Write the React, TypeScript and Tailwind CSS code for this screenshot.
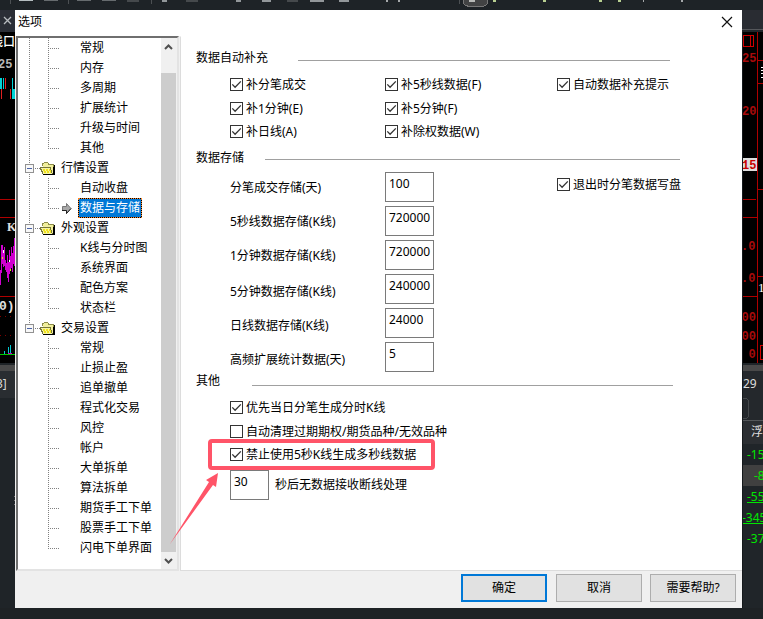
import React from 'react';

interface TreeNode {
    label: string;
    type: 'group' | 'item';
    trunk?: boolean;
    last?: boolean;
    selected?: boolean;
}

interface CheckProps {
    label: string;
    checked?: boolean;
}

interface StorageField {
    label: string;
    value: string;
    low?: boolean;
}

const tree: TreeNode[] = [
    { label: '常规', type: 'item', trunk: true },
    { label: '内存', type: 'item', trunk: true },
    { label: '多周期', type: 'item', trunk: true },
    { label: '扩展统计', type: 'item', trunk: true },
    { label: '升级与时间', type: 'item', trunk: true },
    { label: '其他', type: 'item', trunk: true, last: true },
    { label: '行情设置', type: 'group' },
    { label: '自动收盘', type: 'item', trunk: true },
    { label: '数据与存储', type: 'item', trunk: true, last: true, selected: true },
    { label: '外观设置', type: 'group' },
    { label: 'K线与分时图', type: 'item', trunk: true },
    { label: '系统界面', type: 'item', trunk: true },
    { label: '配色方案', type: 'item', trunk: true },
    { label: '状态栏', type: 'item', trunk: true, last: true },
    { label: '交易设置', type: 'group', last: true },
    { label: '常规', type: 'item' },
    { label: '止损止盈', type: 'item' },
    { label: '追单撤单', type: 'item' },
    { label: '程式化交易', type: 'item' },
    { label: '风控', type: 'item' },
    { label: '帐户', type: 'item' },
    { label: '大单拆单', type: 'item' },
    { label: '算法拆单', type: 'item' },
    { label: '期货手工下单', type: 'item' },
    { label: '股票手工下单', type: 'item' },
    { label: '闪电下单界面', type: 'item', last: true },
];

const storageFields: StorageField[] = [
    { label: '分笔成交存储(天)', value: '100' },
    { label: '5秒线数据存储(K线)', value: '720000' },
    { label: '1分钟数据存储(K线)', value: '720000' },
    { label: '5分钟数据存储(K线)', value: '240000', low: true },
    { label: '日线数据存储(K线)', value: '24000', low: true },
    { label: '高频扩展统计数据(天)', value: '5', low: true },
];

const GroupRow = ({ node }: { node: TreeNode }) => (
    <div className="flex h-5 shrink-0 items-center">
        <svg className="h-5 w-[43px] shrink-0" viewBox="0 0 43 20" shapeRendering="crispEdges">
            <path d={node.last ? 'M11.5 0V6' : 'M11.5 0V20'} stroke="#808080" strokeDasharray="1 1" />
            <path d="M17 10.5H22" stroke="#808080" strokeDasharray="1 1" />
            <rect x="7.5" y="6.5" width="8" height="8" fill="#f8f8f8" stroke="#919191" />
            <path d="M9 10.5H14" stroke="#4b63a7" />
            {/* open folder */}
            <path d="M25 5H31V7H36V16H25Z" fill="#f1ef9c" />
            <path d="M24.5 8V5.500H25.500M26 4.500H30M30.500 5V6.500H35.500V9" stroke="#8c8c4a" fill="none" />
            <path d="M22 9H33L35 16H25Z" fill="#f6f3a6" />
            <path d="M25 11.5H33M26 13.5H34" stroke="#f0e21c" strokeWidth="2" strokeDasharray="2 1" />
            <path d="M22 9.5H32.5V11L34.500 16M22.500 9V11H23.500V13H24.500V16" stroke="#77773b" fill="none" />
            <path d="M25 16.5H37M36.500 7V17M35.500 9V16" stroke="#000" />
        </svg>
        <span>{node.label}</span>
    </div>
);

const ItemRow = ({ node }: { node: TreeNode }) => (
    <div className="flex h-5 shrink-0 items-center">
        <svg className="h-5 w-[60px] shrink-0" viewBox="0 0 60 20" shapeRendering="crispEdges">
            {node.trunk && <path d="M11.5 0V20" stroke="#808080" strokeDasharray="1 1" />}
            <path d={node.last ? 'M30.5 0V10' : 'M30.5 0V20'} stroke="#808080" strokeDasharray="1 1" />
            <path d="M30 10.5H42" stroke="#808080" strokeDasharray="1 1" />
            {node.selected && (
                <g shapeRendering="auto">
                    <path d="M44.5 8.5H48.5V5.5L53 10.5L48.5 15.5V12.5H44.5Z" fill="#a8a8a8" stroke="#777" />
                    <path d="M44 12.500H48.500V15.500L53 10.500" fill="none" stroke="#222" />
                </g>
            )}
        </svg>
        {node.selected ? (
            <span className="h-5 border border-dotted border-[#ff8728] bg-black text-white">
                <span className="block h-[18px] bg-[#0078d7] px-px leading-[18px]">{node.label}</span>
            </span>
        ) : (
            <span className="px-0.5">{node.label}</span>
        )}
    </div>
);

const CheckItem = ({ label, checked = true }: CheckProps) => (
    <label className="flex h-[23px] items-center">
        <span className="flex h-[13px] w-[13px] shrink-0 items-center justify-center border border-[#333] bg-white">
            {checked && (
                <svg className="h-[11px] w-[11px]" viewBox="0 0 11 11">
                    <path d="M1.3 5.4L4.1 8.3L9.8 2.4" fill="none" stroke="#333" strokeWidth="1.3" />
                </svg>
            )}
        </span>
        <span className="pl-[3px]">{label}</span>
    </label>
);

const Sidebar = () => (
    <div className="ml-px flex h-[535px] w-[163px] shrink-0 border-2 border-t-[#6f6f6f] border-r-[#e3e3e3] border-b-[#e3e3e3] border-l-[#6f6f6f] bg-white">
        <div className="flex w-[143px] shrink-0 flex-col overflow-hidden">
            {tree.map((node, i) =>
                node.type === 'group' ? <GroupRow key={i} node={node} /> : <ItemRow key={i} node={node} />
            )}
        </div>
        <div className="flex w-4 shrink-0 flex-col bg-[#f0f0f0]">
            <svg className="h-[35px] w-[15px] shrink-0" viewBox="0 0 15 35">
                <path d="M4 11L7.5 7.5L11 11" fill="none" stroke="#505050" strokeWidth="2" />
            </svg>
            <div className="h-[479px] w-[15px] bg-[#cdcdcd]" />
            <svg className="h-[17px] w-[15px] shrink-0" viewBox="0 0 15 17">
                <path d="M4 7L7.5 10.5L11 7" fill="none" stroke="#505050" strokeWidth="2" />
            </svg>
        </div>
    </div>
);

const SettingsPanel = () => (
    <div className="relative ml-px flex h-[535px] grow flex-col border-t border-b border-l border-t-white border-b-[#dcdcdc] border-l-[#dcdcdc] bg-white pl-[15px]">
        <div className="mt-[13px] flex h-4">
            <span className="w-[102px] leading-4">数据自动补充</span>
            <span className="mt-[10px] h-px w-[372px] bg-[#a0a0a0]" />
        </div>
        <div className="mt-[7px] grid grid-cols-[155px_172px_130px] grid-rows-[24px_23px_23px] pl-[34px]">
            <CheckItem label="补分笔成交" />
            <CheckItem label="补5秒线数据(F)" />
            <CheckItem label="自动数据补充提示" />
            <CheckItem label="补1分钟(E)" />
            <CheckItem label="补5分钟(F)" />
            <span />
            <CheckItem label="补日线(A)" />
            <CheckItem label="补除权数据(W)" />
        </div>

        <div className="mt-[7px] flex h-4">
            <span className="w-[69px] leading-4">数据存储</span>
            <span className="mt-[9px] h-px w-[415px] bg-[#a0a0a0]" />
        </div>
        <div className="mt-1.5 flex pl-[34px]">
            <div className="flex w-[327px] flex-col gap-1">
                {storageFields.map((field) => (
                    <div key={field.label} className="flex h-[30px]">
                        <span className={`w-[155px] leading-[30px] ${field.low ? 'pt-[3px]' : 'pt-px'}`}>{field.label}</span>
                        <span className="h-[30px] w-[49px] border border-[#7a7a7a] pl-[3px] leading-[22px]">{field.value}</span>
                    </div>
                ))}
            </div>
            <div className="pt-px">
                <CheckItem label="退出时分笔数据写盘" />
            </div>
        </div>

        <div className="flex h-4">
            <span className="w-[56px] pt-px leading-4">其他</span>
            <span className="mt-[13px] h-px w-[421px] bg-[#a0a0a0]" />
        </div>
        <div className="mt-2 grid grid-rows-[24px_23px_23px] pl-[34px]">
            <CheckItem label="优先当日分笔生成分时K线" />
            <CheckItem label="自动清理过期期权/期货品种/无效品种" checked={false} />
            <CheckItem label="禁止使用5秒K线生成多秒线数据" />
        </div>
        <div className="mt-1 flex pl-[34px]">
            <span className="h-[30px] w-[39px] border border-[#7a7a7a] pl-[3px] leading-[22px]">30</span>
            <span className="pl-1.5 leading-[30px]">秒后无数据接收断线处理</span>
        </div>

        {/* highlight and pointer over the third option */}
        <div className="absolute top-[402px] left-[27px] h-[31px] w-[227px] rounded-[4px] border-4 border-[#ff5468]" />
        <svg className="absolute top-[434px] left-[-13px] h-[76px] w-[54px]" viewBox="0 0 54 76">
            <path d="M2 73L41 11L38 9L50 2L48 16L45 14Z" fill="#ff5468" />
        </svg>
    </div>
);

const Toolbar = () => (
    <div className="h-[10px] bg-[#1e2327]">
        <svg className="h-[10px] w-[763px]" viewBox="0 0 763 10" shapeRendering="crispEdges">
            <path d="M10.5 0V4M68.5 0V4M151.5 0V4M459.5 0V4" stroke="#4c5053" />
            <path d="M19 .5H33" stroke="#b5bdc0" />
            <path d="M44 .5H58M77 .5H91M102 .5H116" stroke="#666b6e" />
            <path d="M127 1H139M186 1H198M287 1H298" stroke="#45494c" strokeWidth="2" />
            <path d="M162 1H167M262 1H271M310 1H324M339 1H349M236 1H241" stroke="#92979a" strokeWidth="2" />
            <rect x="463.500" y="-7" width="24" height="13" rx="4" fill="#424344" stroke="#777" />
            <path d="M469 1H475" stroke="#b8bab8" strokeWidth="2" />
            <path d="M493 1H496M543 1H546M599 1H602M618 1H621" stroke="#b8cf91" strokeWidth="2" />
            <path d="M386 1H388M398 1H400M643 1H644M681 1H683" stroke="#a5a8aa" strokeWidth="2" />
        </svg>
    </div>
);

// Sliver of the chart window left of the dialog
const LeftChart = () => (
    <svg className="h-[598px] w-[15px] shrink-0" viewBox="0 10 15 598" shapeRendering="crispEdges">
        <rect y="10" width="15" height="598" fill="#1f2428" />
        <rect y="10" width="15" height="22" fill="#2b2e36" />
        <path d="M4 17L11 24M11 17L4 24" stroke="#b9bcc0" strokeWidth="1.3" shapeRendering="auto" />
        <rect y="32" width="15" height="331" fill="#000" />
        <text x="-9" y="46" fontSize="12" fontWeight="500" fill="#fff" fontFamily="'Noto Sans CJK SC', sans-serif">线口</text>
        <text x="-2" y="68" fontSize="12" fontWeight="700" fill="#b8b8b8" fontFamily="'Liberation Mono', monospace">25</text>
        <path d="M0 78H2V89H0ZM3 78H4V89H3ZM12 78H13V89H12ZM12 89H15V99H12Z" fill="#00d4d8" />
        <path d="M5.500 78V89M1.500 89V99M10.500 89V99" stroke="#e02020" />
        <path d="M0 199.500H15M0 217.500H15M0 296.500H15" stroke="#b00000" />
        <text x="7" y="231" fontSize="12" fontWeight="700" fill="#e0e0e0" fontFamily="'Liberation Serif', serif">K</text>
        <path
            d="M.5 270V285M1.500 245V273M2.500 245V264M3.500 252V267M4.500 247V266M5.500 260V270M6.500 263V272M7.500 255V278M8.500 262V282M9.500 250V274M10.500 256V271M11.500 247V268M12.500 253V272M13.500 246V264M14.500 238V266"
            stroke="#d000d0"
        />
        <path d="M3.500 250V253M9.500 260V262" stroke="#fff" />
        <path d="M2.500 257V259M10.500 269V271" stroke="#e6d31a" />
        <path d="M0 316.500H15M0 335.500H15" stroke="#800000" strokeDasharray="1 4" />
        <text x="-1" y="310" fontSize="13" fontWeight="700" fill="#e0e0e0" fontFamily="'Liberation Mono', monospace">0)</text>
        <path d="M4.500 351V354M8.500 347V354M10.500 345V354" stroke="#00c8d0" />
        <path d="M8 353.500H12" stroke="#d000d0" />
        <path d="M0 354.500H15" stroke="#00c800" />
        <rect y="365" width="15" height="6" fill="#494949" />
        <rect y="371" width="15" height="27" fill="#292d31" />
        <text x="-4" y="388" fontSize="12" fill="#d8d8d8" fontFamily="'Noto Sans', sans-serif">3]</text>
        <path d="M14.500 496V506" stroke="#777" strokeDasharray="1 3" />
    </svg>
);

// Price axis and position list right of the dialog
const RightChart = () => (
    <svg className="h-[598px] w-[21px] shrink-0" viewBox="742 10 21 598" shapeRendering="crispEdges">
        <rect x="742" y="10" width="21" height="598" fill="#202529" />
        <rect x="742" y="10" width="21" height="20" fill="#292c32" />
        <path d="M742 29.500H763" stroke="#55575b" />
        <rect x="742" y="32" width="21" height="331" fill="#000" />
        <rect x="743.500" y="35.500" width="10" height="11" fill="none" stroke="#d00000" />
        <path d="M750.500 35V46" stroke="#d00000" />
        <path d="M757.500 32V363M757 60.500H763M757 83.500H763M757 189.500H763M742 199.500H756M742 217.500H757M757 276.500H763M742 296.500H757" stroke="#b00000" />
        <rect x="742" y="158" width="15" height="13" fill="#ddd" />
        <g fontFamily="'Liberation Mono', monospace" fontSize="12" fontWeight="700" fill="#a80b0b">
            <text x="742" y="62">25</text>
            <text x="742" y="115">20</text>
            <text x="742" y="169" fill="#c80000">15</text>
            <text x="741" y="250">.0</text>
            <text x="741" y="282">.0</text>
            <text x="741.500" y="321">00</text>
            <text x="741.500" y="340">00</text>
            <text x="748.500" y="358">0</text>
        </g>
        <path d="M761 67.500H763M761 70.500H763M761 73.500H763M761 77.500H763" stroke="#fff" />
        <text x="758" y="292" fontSize="13" fill="#fff" fontFamily="'Liberation Serif', serif">1</text>
        <rect x="760.500" y="345.500" width="8" height="14" fill="none" stroke="#d00000" />
        <rect x="742" y="365" width="21" height="6" fill="#494949" />
        <rect x="742" y="371" width="21" height="50" fill="#24282c" />
        <text x="743" y="388" fontSize="12" fill="#ddd" fontFamily="'Noto Sans', sans-serif">29</text>
        <path d="M742 398.500H745Q748.500 398.500 748.500 402V415Q748.500 418.500 745 418.500H742" fill="none" stroke="#45494c" />
        <path d="M742 420.500H763" stroke="#54575a" />
        <rect x="742" y="421" width="21" height="23" fill="#2b2e32" />
        <text x="751" y="436" fontSize="12" fill="#ddd" fontFamily="'Noto Sans CJK SC', sans-serif">浮</text>
        <rect x="742" y="465" width="21" height="21" fill="#404040" />
        <g fontFamily="'Noto Sans', sans-serif" fontSize="12" fill="#00e800">
            <text x="747" y="459">-15</text>
            <text x="754" y="480">-8</text>
            <text x="747" y="501">-55</text>
            <text x="742" y="522">-345</text>
            <text x="747" y="543">-37</text>
        </g>
        <path d="M747 502.500H763M742 523.500H763" stroke="#00e800" />
        <path d="M742.500 32V608" stroke="#15191c" />
    </svg>
);

const OptionsDialog = () => (
    <div className="flex h-[598px] w-[727px] shrink-0 flex-col bg-[#f0f0f0]">
        <div className="flex h-[26px] shrink-0 items-center justify-between bg-white pr-[9px] pl-[3px]">
            <span className="-mt-0.5">选项</span>
            <svg className="-mt-[3px] h-3 w-3" viewBox="0 0 12 12">
                <path d="M1 1L11 11M11 1L1 11" stroke="#111" strokeWidth="1.2" />
            </svg>
        </div>
        <div className="flex">
            <Sidebar />
            <SettingsPanel />
        </div>
        <div className="flex justify-end pt-[3px] pr-1.5">
            <button className="mr-[9px] h-7 w-[86px] border-2 border-[#0078d7] bg-[#e1e1e1]">确定</button>
            <button className="mr-2 h-7 w-[86px] border border-[#adadad] bg-[#e1e1e1]">取消</button>
            <button className="h-7 w-[86px] border border-[#adadad] bg-[#e1e1e1]">需要帮助?</button>
        </div>
    </div>
);

export default function App() {
    return (
        <div className="flex h-[619px] w-[763px] flex-col overflow-hidden bg-[#1e2225] font-['Noto_Sans','Noto_Sans_CJK_SC',sans-serif] text-[12px] leading-4 whitespace-nowrap text-black">
            <Toolbar />
            <div className="flex">
                <LeftChart />
                <OptionsDialog />
                <RightChart />
            </div>
        </div>
    );
}
